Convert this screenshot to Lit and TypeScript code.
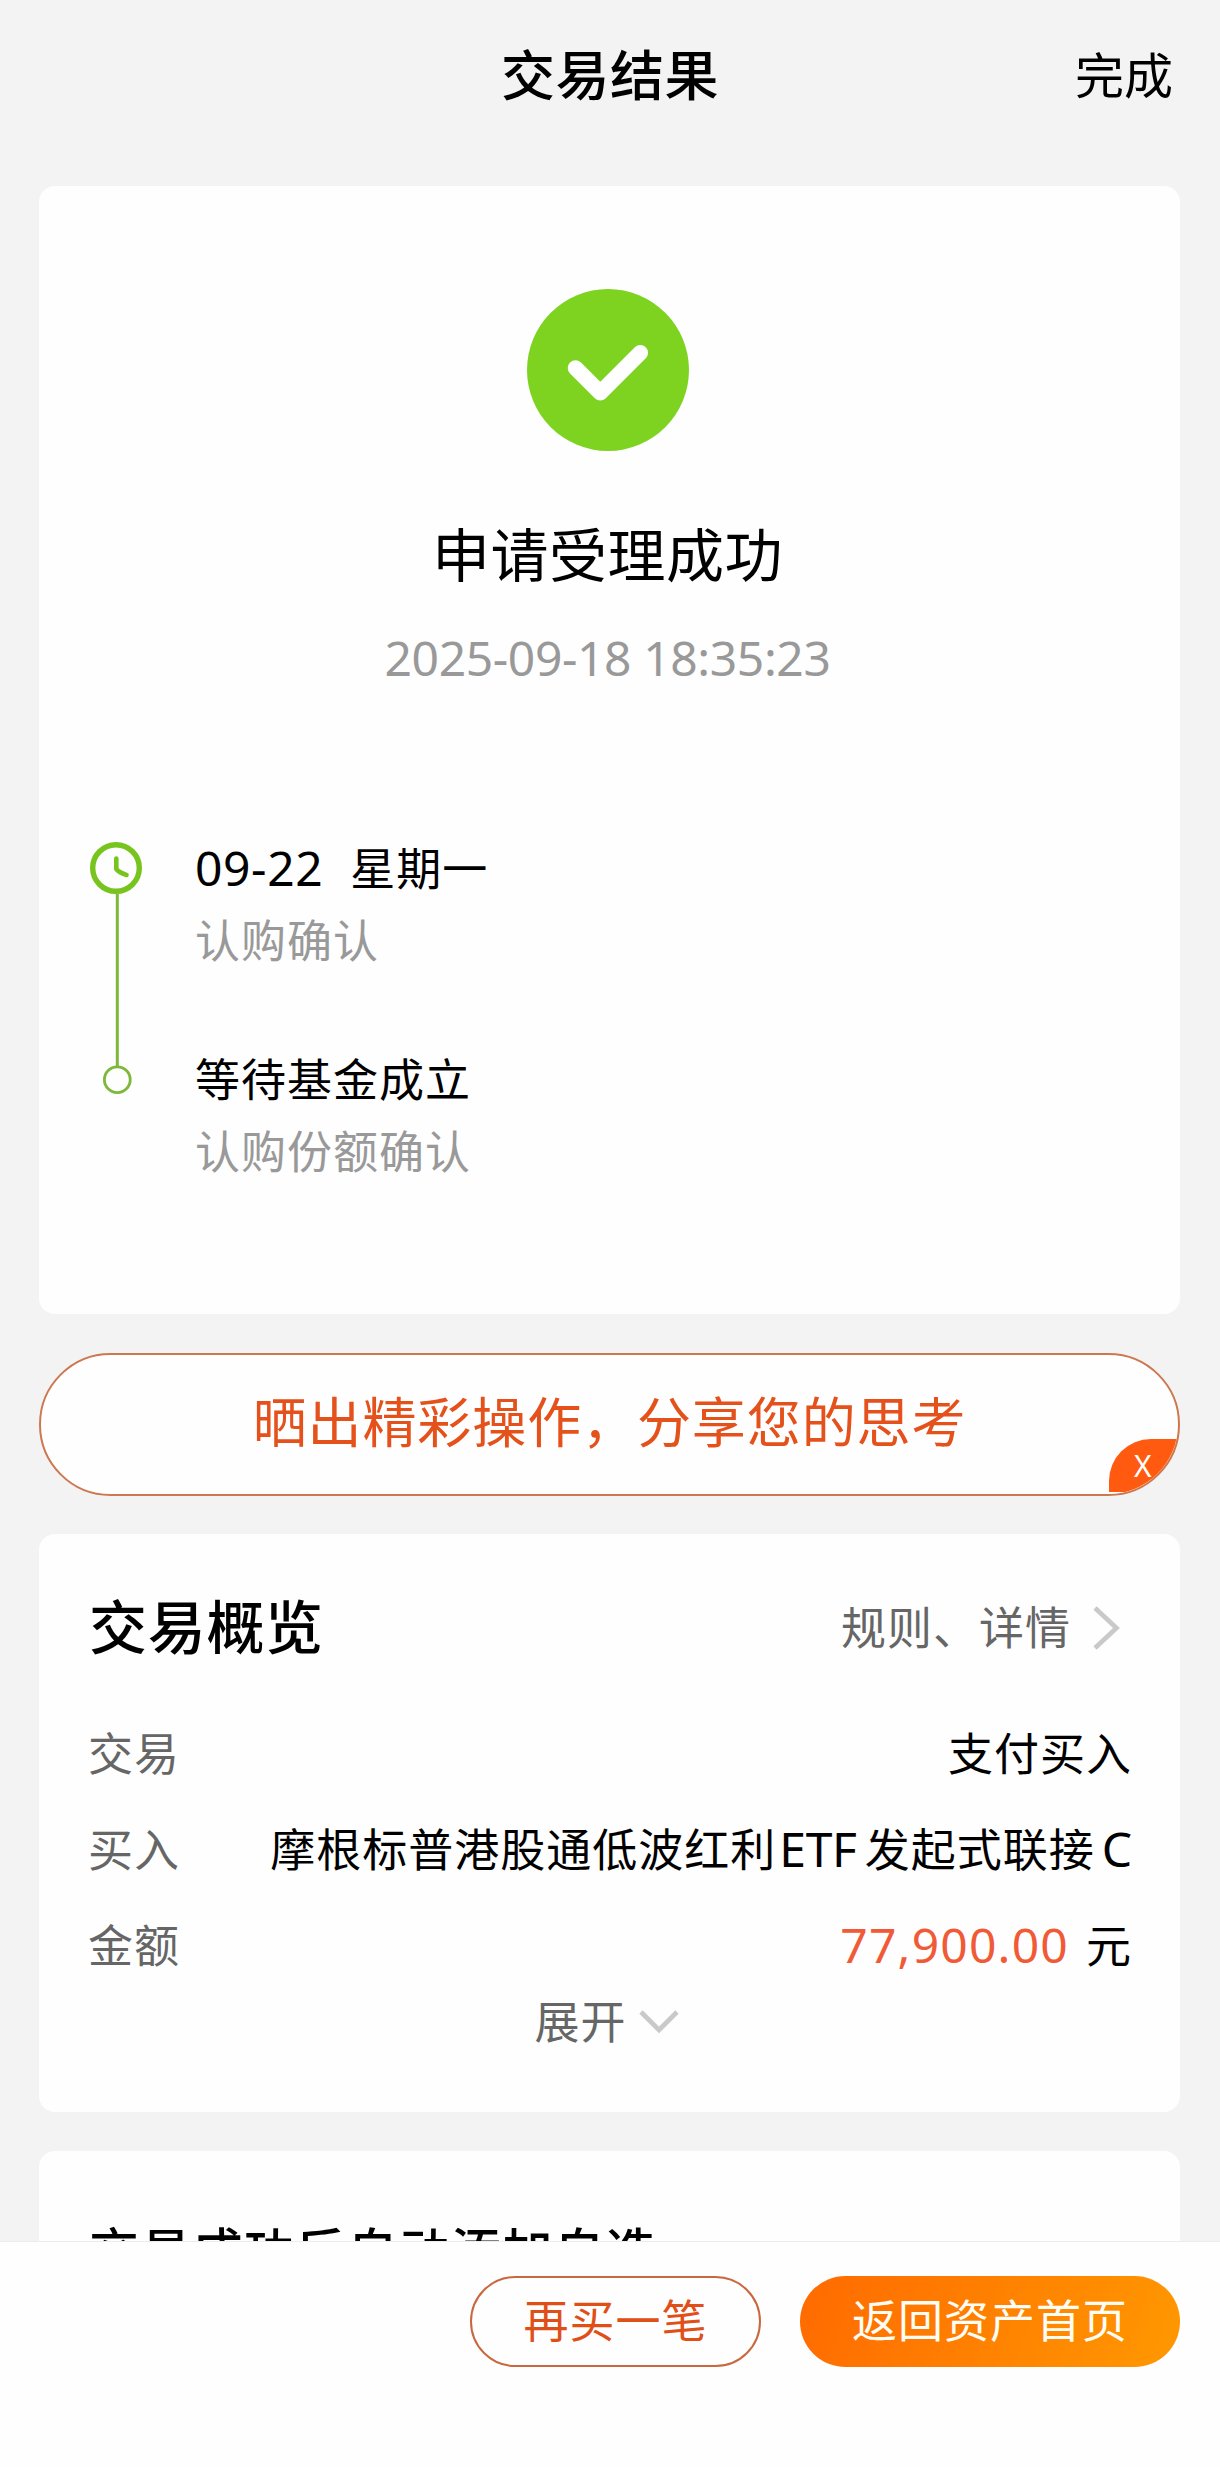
import { LitElement, html, css, svg } from "lit";
import { customElement } from "lit/decorators.js";

interface Step {
  date: string;
  title: string;
  note: string;
}

const STEPS: Step[] = [
  { date: "09-22", title: "星期一", note: "认购确认" },
  { date: "", title: "等待基金成立", note: "认购份额确认" },
];

@customElement("app-root")
export class AppRoot extends LitElement {
  static styles = css`
    :host {
      display: flex;
      flex-direction: column;
      height: 2467px;
      background: #f3f3f3;
      color: #000;
      font-family: "Noto Sans", "Noto Sans CJK SC", sans-serif;
      font-size: 45px;
      letter-spacing: 1px;
      line-height: 60px;
      white-space: nowrap;
      overflow: hidden;
    }
    * {
      box-sizing: border-box;
    }
    svg {
      display: block;
      flex: none;
    }
    .scroll {
      height: 2241px;
      flex: none;
      overflow: hidden;
      display: flex;
      flex-direction: column;
    }
    .header {
      flex: none;
      height: 149px;
      margin-bottom: 37px;
      padding: 0 47px 0 47px;
      display: grid;
      grid-template-columns: 1fr auto 1fr;
      align-items: center;
    }
    .title {
      grid-column: 2;
      font-size: 54px;
      font-weight: 500;
      letter-spacing: 0.5px;
    }
    .done {
      justify-self: end;
      font-size: 49px;
      letter-spacing: 0;
    }
    .card {
      flex: none;
      margin: 0 40px 0 39px;
      background: #fefefe;
      border-radius: 16px;
    }
    .result {
      padding: 103px 54px 132px 50px;
      display: flex;
      flex-direction: column;
      align-items: center;
      margin-bottom: 39px;
    }
    .state {
      margin-top: 68px;
      font-size: 58px;
      line-height: 72px;
      letter-spacing: 0.5px;
    }
    .stamp {
      margin-top: 37px;
      font-size: 48px;
      letter-spacing: -0.4px;
      color: #999;
    }
    .timeline {
      align-self: stretch;
      margin-top: 150px;
      display: flex;
      gap: 50px;
    }
    .steps {
      display: flex;
      flex-direction: column;
      gap: 79px;
      padding-top: 1px;
    }
    .step {
      display: flex;
      flex-direction: column;
      gap: 12px;
    }
    .latin {
      font-size: 48px;
      line-height: 0;
      letter-spacing: -0.2px;
    }
    .date {
      letter-spacing: 0.6px;
      margin-right: 27px;
    }
    .note {
      color: #999;
    }
    .banner {
      flex: none;
      position: relative;
      height: 143px;
      margin: 0 40px 38px 39px;
      padding-bottom: 5px;
      border: 2px solid #cc7850;
      border-radius: 72px;
      background: #fefefe;
      overflow: hidden;
      display: flex;
      align-items: center;
      justify-content: center;
      font-size: 54px;
      letter-spacing: 0.9px;
      color: #e5511b;
    }
    .close {
      position: absolute;
      right: 0;
      bottom: 2px;
      width: 69px;
      height: 53px;
      border-radius: 42px 0 0 0;
      background: #ff5a10;
      color: #fff;
      font-size: 30px;
      line-height: 53px;
      letter-spacing: 0;
      padding-left: 25px;
    }
    .overview {
      padding: 57px 49px 62px 50px;
      margin-bottom: 39px;
    }
    .head {
      display: flex;
      align-items: center;
      justify-content: space-between;
      height: 72px;
      margin-bottom: 43px;
    }
    .name {
      font-size: 58px;
      font-weight: 500;
      letter-spacing: 0.7px;
    }
    .rules {
      display: flex;
      align-items: center;
      gap: 22px;
      padding: 2px 11px 0 0;
      color: #666;
    }
    .row {
      display: flex;
      align-items: center;
      justify-content: space-between;
      height: 96px;
    }
    .label {
      color: #666;
      margin-left: -1px;
    }
    .value {
      margin-right: -1px;
    }
    .code {
      margin: 0 8px 0 3px;
    }
    .share {
      margin-left: 7px;
    }
    .amount {
      color: #f05a36;
      letter-spacing: 1.2px;
      margin-right: 17px;
    }
    .expand {
      display: flex;
      align-items: center;
      justify-content: center;
      gap: 12px;
      height: 56px;
      padding-right: 7px;
      color: #666;
    }
    .watch {
      padding: 70px 50px 60px;
      font-size: 50px;
      font-weight: 500;
      letter-spacing: 1.7px;
    }
    .footer {
      flex: none;
      height: 226px;
      border-top: 1px solid #ececec;
      background: #fefefe;
      padding: 34px 40px 0 0;
      display: flex;
      justify-content: flex-end;
      gap: 39px;
    }
    .button {
      height: 91px;
      border-radius: 46px;
      padding-bottom: 2px;
      display: flex;
      align-items: center;
      justify-content: center;
    }
    .again {
      width: 291px;
      border: 2px solid #c9683f;
      color: #e04f18;
    }
    .home {
      width: 380px;
      color: #fffdf5;
      background: linear-gradient(110deg, #ff6a00, #ff9800);
    }
  `;

  private check() {
    return svg`<svg width="162" height="162" viewBox="0 0 162 162">
      <circle cx="81" cy="81" r="81" fill="#7ed321"></circle>
      <path d="M48.5 79 L73.3 103.7 L113.3 63.7" fill="none" stroke="#fff"
        stroke-width="15.5" stroke-linecap="round" stroke-linejoin="round"></path>
    </svg>`;
  }

  private rail() {
    return svg`<svg width="56" height="260" viewBox="0 0 56 260" fill="none" stroke="#78c41f">
      <circle cx="27" cy="30" r="23.3" stroke-width="5.4"></circle>
      <path d="M27.3 20.5 V31 Q30 34.5 37.5 37" stroke-width="4.6"
        stroke-linecap="round" stroke-linejoin="round"></path>
      <path d="M28.3 56 V228.5" stroke="#7db83a" stroke-width="3"></path>
      <circle cx="28.3" cy="241.7" r="12.9" stroke="#7db83a" stroke-width="2.8"></circle>
    </svg>`;
  }

  render() {
    return html`
      <div class="scroll">
        <div class="header">
          <div class="title">交易结果</div>
          <div class="done">完成</div>
        </div>

        <div class="card result">
          ${this.check()}
          <div class="state">申请受理成功</div>
          <div class="stamp">2025-09-18 18:35:23</div>
          <div class="timeline">
            ${this.rail()}
            <div class="steps">
              ${STEPS.map(
                (s) => html`<div class="step">
                  <div>${s.date ? html`<span class="latin date">${s.date}</span>` : ""}${s.title}</div>
                  <div class="note">${s.note}</div>
                </div>`
              )}
            </div>
          </div>
        </div>

        <div class="banner">
          晒出精彩操作，分享您的思考
          <div class="close">X</div>
        </div>

        <div class="card overview">
          <div class="head">
            <div class="name">交易概览</div>
            <div class="rules">
              规则、详情
              <svg width="27" height="44" viewBox="0 0 27 44" fill="none">
                <path d="M2 2 L23.5 22 L2 42" stroke="#c9c9c9" stroke-width="4.6"></path>
              </svg>
            </div>
          </div>
          <div class="row">
            <div class="label">交易</div>
            <div class="value">支付买入</div>
          </div>
          <div class="row">
            <div class="label">买入</div>
            <div class="value">摩根标普港股通低波红利<span class="latin code">ETF</span>发起式联接<span class="latin share">C</span></div>
          </div>
          <div class="row">
            <div class="label">金额</div>
            <div class="value"><span class="latin amount">77,900.00</span>元</div>
          </div>
          <div class="expand">
            展开
            <svg width="40" height="24" viewBox="0 0 40 24" fill="none">
              <path d="M2 2 L20 20 L38 2" stroke="#c9c9c9" stroke-width="4.6"></path>
            </svg>
          </div>
        </div>

        <div class="card watch">交易成功后自动添加自选</div>
      </div>

      <div class="footer">
        <div class="button again">再买一笔</div>
        <div class="button home">返回资产首页</div>
      </div>
    `;
  }
}
